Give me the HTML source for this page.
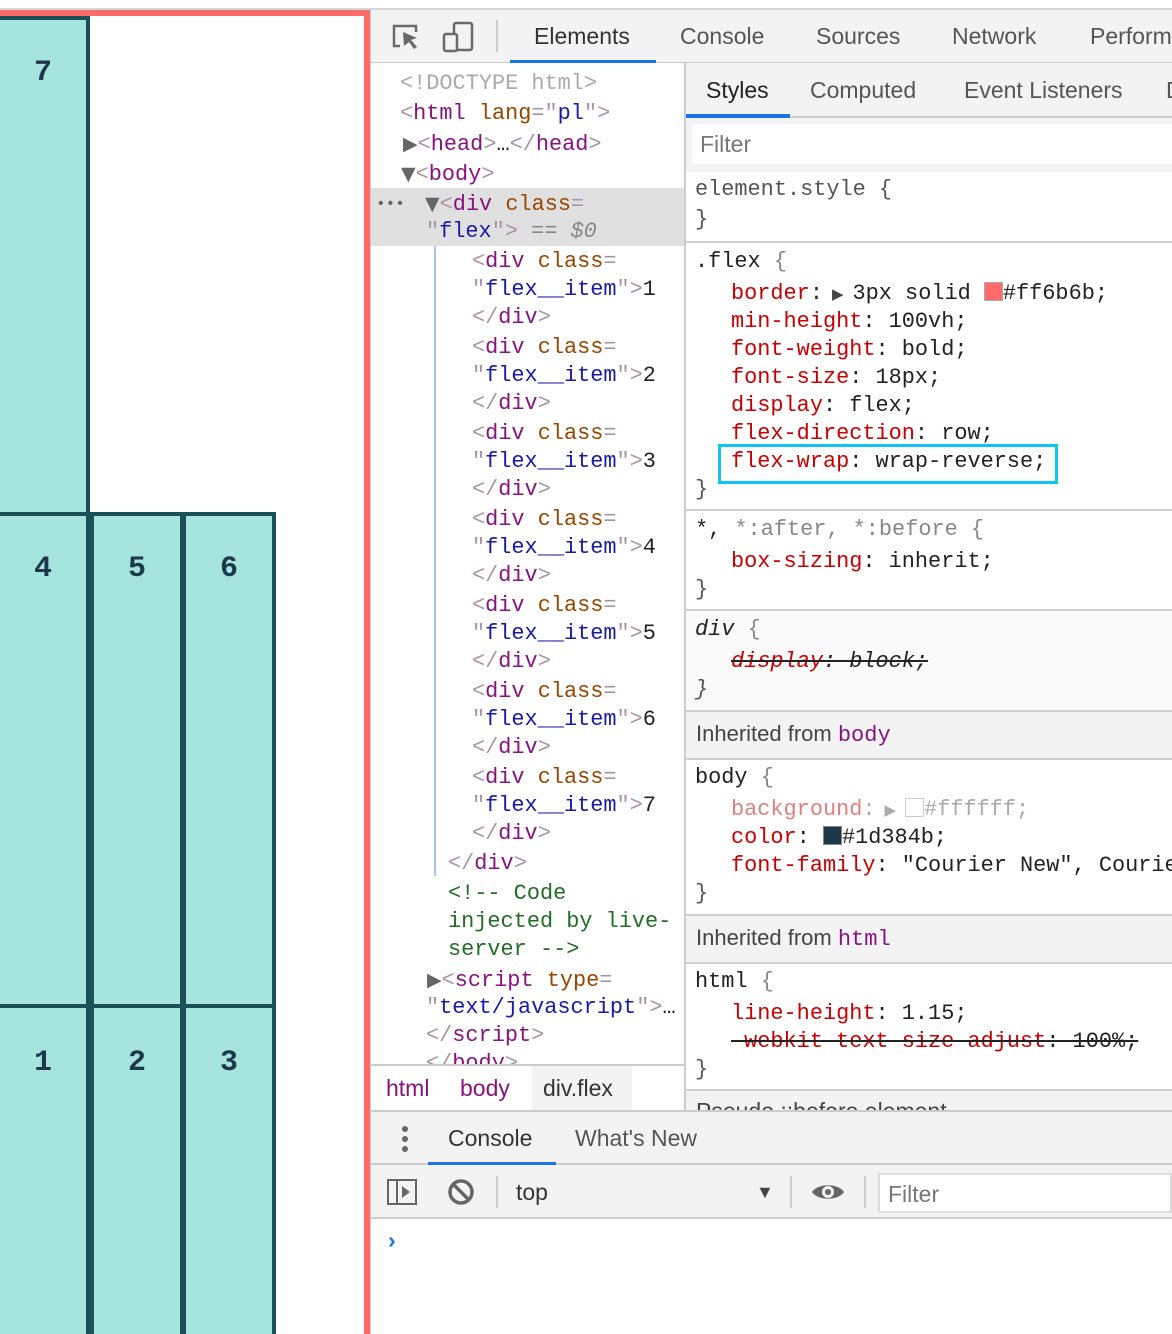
<!DOCTYPE html>
<html><head><meta charset="utf-8">
<style>
*{box-sizing:border-box;margin:0;padding:0}
html{overflow:hidden;width:1172px;height:1334px}
body{width:1172px;height:1334px;overflow:hidden;position:relative;background:#fff;font-family:"Liberation Sans",sans-serif}
.a{position:absolute}
.it{position:absolute;background:#a6e4de;border:4px solid #1b4f5a;width:94px}
.n{position:absolute;left:0;right:0;text-align:center;font:bold 30px "Liberation Mono",monospace;color:#1d384b}
.m{position:absolute;font:21.9px/28px "Liberation Mono",monospace;white-space:pre;color:#222;padding-top:2px}
.t{color:#881280}.b{color:#a894a6}.an{color:#994500}.av{color:#1a1aa6}.c{color:#236e25}
.p{color:#c80000}.g{color:#888}
.s{position:absolute;font:23px/28px "Liberation Sans",sans-serif;color:#333;white-space:nowrap}
.tr{color:#666;font-size:19px;font-family:"DejaVu Sans",sans-serif}
</style></head><body>
<div class="a" style="left:0;top:8px;width:1172px;height:2px;background:#d6d6d6"></div>
<div class="a" style="left:0;top:10px;width:370px;height:1324px;background:#ff6b6b"></div>
<div class="a" style="left:0;top:16px;width:364px;height:1318px;background:#fff"></div>
<div class="it" style="left:-4px;top:16px;height:500px"><div class="n" style="top:36px">7</div></div>
<div class="it" style="left:-4px;top:512px;height:500px"><div class="n" style="top:36px">4</div></div>
<div class="it" style="left:90px;top:512px;height:500px"><div class="n" style="top:36px">5</div></div>
<div class="it" style="left:182px;top:512px;height:500px"><div class="n" style="top:36px">6</div></div>
<div class="it" style="left:-4px;top:1004px;height:340px"><div class="n" style="top:38px">1</div></div>
<div class="it" style="left:90px;top:1004px;height:340px"><div class="n" style="top:38px">2</div></div>
<div class="it" style="left:182px;top:1004px;height:340px"><div class="n" style="top:38px">3</div></div>

<div class="a" style="left:370px;top:10px;width:802px;height:1324px;background:#fff;border-left:1px solid #ccc"></div>
<div class="a" style="left:371px;top:10px;width:801px;height:53px;background:#f3f3f3;border-bottom:1px solid #ccc"></div>
<svg class="a" style="left:388px;top:20px" width="90" height="34" viewBox="0 0 90 34">
<path d="M12 26H6V6h22v6" fill="none" stroke="#6a6a6a" stroke-width="2.5"/>
<path d="M15 12l14 6-6 2 6 7-3 2-5-7-5 4z" fill="#6a6a6a"/>
<rect x="66" y="3" width="18" height="27" rx="2" fill="none" stroke="#6a6a6a" stroke-width="2.5"/>
<rect x="56" y="14" width="13" height="17" rx="2" fill="#f3f3f3" stroke="#6a6a6a" stroke-width="2.5"/>
</svg>
<div class="a" style="left:496px;top:20px;width:2px;height:32px;background:#ccc"></div>
<div class="s" style="left:534px;top:22px;color:#333">Elements</div>
<div class="a" style="left:510px;top:60px;width:146px;height:3px;background:#1a73e8"></div>
<div class="s" style="left:680px;top:22px;color:#555">Console</div>
<div class="s" style="left:816px;top:22px;color:#555">Sources</div>
<div class="s" style="left:952px;top:22px;color:#555">Network</div>
<div class="s" style="left:1090px;top:22px;color:#555">Performance</div>

<div class="a" style="left:684px;top:63px;width:2px;height:1047px;background:#ccc"></div>
<div class="a" style="left:371px;top:188px;width:313px;height:58px;background:#e0e0e0"></div>
<div class="a" style="left:434px;top:246px;width:2px;height:630px;background:#a8c6ee"></div>
<div class="m" style="left:400px;top:68px;color:#aaa">&lt;!DOCTYPE html&gt;</div>
<div class="m" style="left:400px;top:98px"><span class="b">&lt;</span><span class="t">html</span> <span class="an">lang</span><span class="b">="</span><span class="av">pl</span><span class="b">"&gt;</span></div>
<div class="m" style="left:403px;top:128px"><span class="tr">▶</span><span class="b">&lt;</span><span class="t">head</span><span class="b">&gt;</span>…<span class="b">&lt;/</span><span class="t">head</span><span class="b">&gt;</span></div>
<div class="m" style="left:401px;top:158px"><span class="tr">▼</span><span class="b">&lt;</span><span class="t">body</span><span class="b">&gt;</span></div>
<div class="m" style="left:376px;top:188px;color:#666;font-size:16px">•••</div>
<div class="m" style="left:425px;top:188px"><span class="tr">▼</span><span class="b">&lt;</span><span class="t">div</span> <span class="an">class</span><span class="b">=</span></div>
<div class="m" style="left:426px;top:216px"><span class="b">"</span><span class="av">flex</span><span class="b">"&gt;</span> <span class="g">== <i>$0</i></span></div>
<div class="m" style="left:472px;top:246px"><span class="b">&lt;</span><span class="t">div</span> <span class="an">class</span><span class="b">=</span></div>
<div class="m" style="left:472px;top:274px"><span class="b">"</span><span class="av">flex__item</span><span class="b">"&gt;</span>1</div>
<div class="m" style="left:472px;top:302px"><span class="b">&lt;/</span><span class="t">div</span><span class="b">&gt;</span></div>
<div class="m" style="left:472px;top:332px"><span class="b">&lt;</span><span class="t">div</span> <span class="an">class</span><span class="b">=</span></div>
<div class="m" style="left:472px;top:360px"><span class="b">"</span><span class="av">flex__item</span><span class="b">"&gt;</span>2</div>
<div class="m" style="left:472px;top:388px"><span class="b">&lt;/</span><span class="t">div</span><span class="b">&gt;</span></div>
<div class="m" style="left:472px;top:418px"><span class="b">&lt;</span><span class="t">div</span> <span class="an">class</span><span class="b">=</span></div>
<div class="m" style="left:472px;top:446px"><span class="b">"</span><span class="av">flex__item</span><span class="b">"&gt;</span>3</div>
<div class="m" style="left:472px;top:474px"><span class="b">&lt;/</span><span class="t">div</span><span class="b">&gt;</span></div>
<div class="m" style="left:472px;top:504px"><span class="b">&lt;</span><span class="t">div</span> <span class="an">class</span><span class="b">=</span></div>
<div class="m" style="left:472px;top:532px"><span class="b">"</span><span class="av">flex__item</span><span class="b">"&gt;</span>4</div>
<div class="m" style="left:472px;top:560px"><span class="b">&lt;/</span><span class="t">div</span><span class="b">&gt;</span></div>
<div class="m" style="left:472px;top:590px"><span class="b">&lt;</span><span class="t">div</span> <span class="an">class</span><span class="b">=</span></div>
<div class="m" style="left:472px;top:618px"><span class="b">"</span><span class="av">flex__item</span><span class="b">"&gt;</span>5</div>
<div class="m" style="left:472px;top:646px"><span class="b">&lt;/</span><span class="t">div</span><span class="b">&gt;</span></div>
<div class="m" style="left:472px;top:676px"><span class="b">&lt;</span><span class="t">div</span> <span class="an">class</span><span class="b">=</span></div>
<div class="m" style="left:472px;top:704px"><span class="b">"</span><span class="av">flex__item</span><span class="b">"&gt;</span>6</div>
<div class="m" style="left:472px;top:732px"><span class="b">&lt;/</span><span class="t">div</span><span class="b">&gt;</span></div>
<div class="m" style="left:472px;top:762px"><span class="b">&lt;</span><span class="t">div</span> <span class="an">class</span><span class="b">=</span></div>
<div class="m" style="left:472px;top:790px"><span class="b">"</span><span class="av">flex__item</span><span class="b">"&gt;</span>7</div>
<div class="m" style="left:472px;top:818px"><span class="b">&lt;/</span><span class="t">div</span><span class="b">&gt;</span></div>
<div class="m" style="left:448px;top:848px"><span class="b">&lt;/</span><span class="t">div</span><span class="b">&gt;</span></div>
<div class="m c" style="left:448px;top:878px">&lt;!-- Code</div>
<div class="m c" style="left:448px;top:906px">injected by live-</div>
<div class="m c" style="left:448px;top:934px">server --&gt;</div>
<div class="m" style="left:427px;top:964px"><span class="tr">▶</span><span class="b">&lt;</span><span class="t">script</span> <span class="an">type</span><span class="b">=</span></div>
<div class="m" style="left:426px;top:992px"><span class="b">"</span><span class="av">text/javascript</span><span class="b">"&gt;</span>…</div>
<div class="m" style="left:426px;top:1020px"><span class="b">&lt;/</span><span class="t">script</span><span class="b">&gt;</span></div>
<div class="m" style="left:426px;top:1048px;height:16px;overflow:hidden"><span class="b">&lt;/</span><span class="t">body</span><span class="b">&gt;</span></div>
<div class="a" style="left:371px;top:1064px;width:313px;height:2px;background:#ccc"></div>
<div class="s" style="left:386px;top:1074px;color:#881280">html</div>
<div class="s" style="left:460px;top:1074px;color:#881280">body</div>
<div class="a" style="left:532px;top:1066px;width:100px;height:44px;background:#f3f3f3"></div>
<div class="s" style="left:543px;top:1074px;color:#333">div.flex</div>

<div class="a" style="left:686px;top:63px;width:486px;height:55px;background:#f3f3f3;border-bottom:2px solid #ccc"></div>
<div class="s" style="left:706px;top:76px;color:#222">Styles</div>
<div class="s" style="left:810px;top:76px;color:#555">Computed</div>
<div class="s" style="left:964px;top:76px;color:#555">Event Listeners</div>
<div class="s" style="left:1166px;top:76px;color:#555">D</div>
<div class="a" style="left:686px;top:114px;width:104px;height:4px;background:#1a73e8"></div>
<div class="a" style="left:686px;top:118px;width:486px;height:54px;background:#f3f3f3"></div>
<div class="a" style="left:692px;top:124px;width:480px;height:40px;background:#fff"></div>
<div class="s" style="left:700px;top:130px;color:#777">Filter</div>
<div class="a" style="left:686px;top:241px;width:486px;height:2px;background:#d0d0d0"></div>
<div class="m" style="left:695px;top:174px;color:#555">element.style {</div>
<div class="m" style="left:695px;top:204px;color:#555">}</div>
<div class="m" style="left:695px;top:246px">.flex <span class="g">{</span></div>
<div class="m" style="left:731px;top:278px"><span class="p">border</span>:<span style="font-size:15px;color:#444"> ▶ </span>3px solid <span style="display:inline-block;width:19px;height:19px;background:#ff6b6b;border:1px solid #aaa;vertical-align:-2px"></span>#ff6b6b;</div>
<div class="m" style="left:731px;top:306px"><span class="p">min-height</span>: 100vh;</div>
<div class="m" style="left:731px;top:334px"><span class="p">font-weight</span>: bold;</div>
<div class="m" style="left:731px;top:362px"><span class="p">font-size</span>: 18px;</div>
<div class="m" style="left:731px;top:390px"><span class="p">display</span>: flex;</div>
<div class="m" style="left:731px;top:418px"><span class="p">flex-direction</span>: row;</div>
<div class="a" style="left:718px;top:444px;width:340px;height:40px;border:3px solid #12c3f4"></div>
<div class="m" style="left:731px;top:446px"><span class="p">flex-wrap</span>: wrap-reverse;</div>
<div class="m" style="left:695px;top:474px;color:#555">}</div>
<div class="a" style="left:686px;top:509px;width:486px;height:2px;background:#d0d0d0"></div>
<div class="m" style="left:695px;top:514px">*, <span class="g">*:after, *:before {</span></div>
<div class="m" style="left:731px;top:546px"><span class="p">box-sizing</span>: inherit;</div>
<div class="m" style="left:695px;top:574px;color:#555">}</div>
<div class="a" style="left:686px;top:609px;width:486px;height:2px;background:#d0d0d0"></div>
<div class="a" style="left:686px;top:611px;width:486px;height:99px;background:#fafafa"></div>
<div class="m" style="left:695px;top:614px"><i>div</i> <span class="g">{</span></div>
<div class="m" style="left:731px;top:646px;text-decoration:line-through"><i><span class="p">display</span>: block;</i></div>
<div class="m" style="left:695px;top:674px;color:#555"><i>}</i></div>
<div class="a" style="left:686px;top:710px;width:486px;height:50px;background:#f3f3f3;border-top:2px solid #d0d0d0;border-bottom:2px solid #d0d0d0"></div>
<div class="s" style="left:696px;top:720px;color:#444;font-size:22px">Inherited from <span style="font-family:'Liberation Mono',monospace;color:#881280">body</span></div>
<div class="m" style="left:695px;top:762px">body <span class="g">{</span></div>
<div class="m" style="left:731px;top:794px;color:#aaa"><span style="color:#e08080">background</span>:<span style="font-size:15px;color:#aaa"> ▶ </span><span style="display:inline-block;width:19px;height:19px;background:#fff;border:1px solid #ccc;vertical-align:-2px"></span>#ffffff;</div>
<div class="m" style="left:731px;top:822px"><span class="p">color</span>: <span style="display:inline-block;width:19px;height:19px;background:#1d384b;border:1px solid #888;vertical-align:-2px"></span>#1d384b;</div>
<div class="m" style="left:731px;top:850px"><span class="p">font-family</span>: "Courier New", Courier</div>
<div class="m" style="left:695px;top:878px;color:#555">}</div>
<div class="a" style="left:686px;top:914px;width:486px;height:50px;background:#f3f3f3;border-top:2px solid #d0d0d0;border-bottom:2px solid #d0d0d0"></div>
<div class="s" style="left:696px;top:924px;color:#444;font-size:22px">Inherited from <span style="font-family:'Liberation Mono',monospace;color:#881280">html</span></div>
<div class="m" style="left:695px;top:966px">html <span class="g">{</span></div>
<div class="m" style="left:731px;top:998px"><span class="p">line-height</span>: 1.15;</div>
<div class="m" style="left:731px;top:1026px;text-decoration:line-through"><span class="p">-webkit-text-size-adjust</span>: 100%;</div>
<div class="m" style="left:695px;top:1054px;color:#555">}</div>
<div class="a" style="left:686px;top:1089px;width:486px;height:21px;background:#f3f3f3;border-top:2px solid #d0d0d0;overflow:hidden"><div class="s" style="left:10px;top:6px;color:#444">Pseudo ::before element</div></div>

<div class="a" style="left:371px;top:1110px;width:801px;height:55px;background:#f3f3f3;border-top:2px solid #ccc;border-bottom:2px solid #ccc"></div>
<div class="a" style="left:402px;top:1126px;width:6px;height:6px;border-radius:3px;background:#666"></div>
<div class="a" style="left:402px;top:1136px;width:6px;height:6px;border-radius:3px;background:#666"></div>
<div class="a" style="left:402px;top:1146px;width:6px;height:6px;border-radius:3px;background:#666"></div>
<div class="s" style="left:448px;top:1124px;color:#333">Console</div>
<div class="s" style="left:575px;top:1124px;color:#555">What's New</div>
<div class="a" style="left:428px;top:1162px;width:128px;height:4px;background:#1a73e8"></div>
<div class="a" style="left:371px;top:1165px;width:801px;height:54px;background:#f3f3f3;border-bottom:2px solid #ccc"></div>
<svg class="a" style="left:386px;top:1178px" width="90" height="30" viewBox="0 0 90 30">
<rect x="2" y="2" width="28" height="24" fill="none" stroke="#666" stroke-width="2"/>
<line x1="11" y1="2" x2="11" y2="26" stroke="#666" stroke-width="2"/>
<path d="M16 8l8 6-8 6z" fill="#666"/>
<circle cx="75" cy="14" r="11" fill="none" stroke="#666" stroke-width="3.5"/>
<line x1="67" y1="6" x2="83" y2="22" stroke="#666" stroke-width="3.5"/>
</svg>
<div class="a" style="left:496px;top:1176px;width:2px;height:32px;background:#ccc"></div>
<div class="s" style="left:516px;top:1178px;color:#333">top</div>
<div class="s" style="left:756px;top:1178px;color:#444;font-size:18px">▼</div>
<div class="a" style="left:790px;top:1176px;width:2px;height:32px;background:#ccc"></div>
<svg class="a" style="left:810px;top:1180px" width="36" height="24" viewBox="0 0 36 24"><path d="M2 12C8 3 28 3 34 12C28 21 8 21 2 12z" fill="#666"/><circle cx="18" cy="12" r="6" fill="#f3f3f3"/><circle cx="18" cy="12" r="3" fill="#666"/></svg>
<div class="a" style="left:864px;top:1176px;width:2px;height:32px;background:#ccc"></div>
<div class="a" style="left:878px;top:1173px;width:294px;height:40px;background:#fff;border:2px solid #ddd"></div>
<div class="s" style="left:888px;top:1180px;color:#777">Filter</div>
<div class="s" style="left:388px;top:1226px;color:#1a73e8;font-weight:bold">›</div>
</body></html>
